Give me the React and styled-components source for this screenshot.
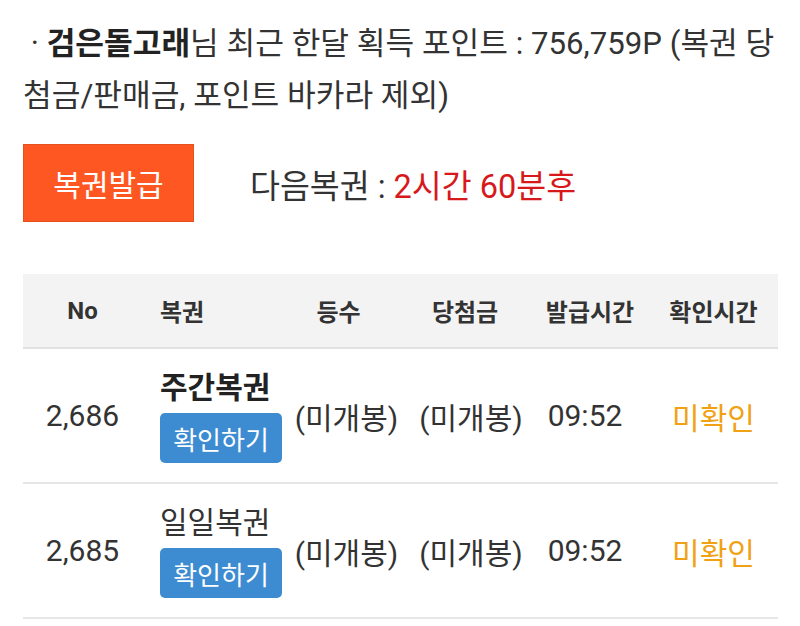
import React from "react";
import styled, { createGlobalStyle } from "styled-components";

const Global = createGlobalStyle`
  html, body { margin: 0; padding: 0; background: #fff; }
  body { font-family: Roboto, "Noto Sans CJK KR", "Noto Sans", sans-serif; color: #333; }
`;

const Page = styled.div`
  width: 800px;
  box-sizing: border-box;
  padding: 18px 22px 0 23px;
`;

const Info = styled.p`
  margin: 0;
  font-size: 31.2px;
  line-height: 52px;
  color: #333;
`;

const Name = styled.b`
  font-weight: 700;
  color: #222;
`;

const ActionRow = styled.div`
  display: flex;
  align-items: center;
  margin-top: 22px;
  gap: 56px;
`;

const IssueButton = styled.button`
  width: 171px;
  height: 78px;
  background: #ff5722;
  border: 1px solid #e5501f;
  color: #fff;
  font-family: inherit;
  font-size: 30px;
  padding: 0;
  cursor: pointer;
`;

const NextInfo = styled.div`
  font-size: 32.5px;
  color: #333;
`;

const Red = styled.span`
  color: #d7191c;
`;

const cols = [
  { w: 119, align: "center", pl: 0, hs: 0 },
  { w: 144, align: "left", pl: 18, hs: 0 },
  { w: 121, align: "center", pl: 0, hs: -8 },
  { w: 128, align: "center", pl: 0, hs: -6 },
  { w: 100, align: "center", pl: 0, hs: 5 },
  { w: 143, align: "center", pl: 14, hs: 0 },
];

const Table = styled.div`
  margin-top: 52px;
  display: grid;
  grid-template-columns: ${cols.map((c) => `${c.w}px`).join(" ")};
`;

const HeadCell = styled.div`
  background: #f3f3f3;
  height: 73px;
  border-bottom: 2px solid #e2e2e2;
  display: flex;
  align-items: center;
  justify-content: ${(p) => (p.$align === "left" ? "flex-start" : "center")};
  padding-left: ${(p) => p.$pl + Math.max(p.$shift * 2, 0)}px;
  padding-right: ${(p) => Math.max(-p.$shift * 2, 0)}px;
  font-size: 24px;
  font-weight: 700;
  color: #333;
  white-space: nowrap;
`;

const Cell = styled.div`
  height: 133px;
  border-bottom: 2px solid #e6e6e6;
  display: flex;
  flex-direction: column;
  justify-content: center;
  align-items: ${(p) => (p.$align === "left" ? "flex-start" : "center")};
  padding-left: ${(p) => p.$pl}px;
  font-size: 30px;
  color: ${(p) => p.$color || "#333"};
  white-space: nowrap;
`;

const TicketName = styled.div`
  font-size: 30px;
  line-height: 36px;
  margin-top: 2px;
  font-weight: ${(p) => (p.$bold ? 700 : 400)};
  color: ${(p) => (p.$bold ? "#222" : "#333")};
`;

const CheckButton = styled.button`
  margin-top: 7px;
  width: 122px;
  height: 50px;
  border: none;
  border-radius: 5px;
  background: #3d8cd1;
  color: #fff;
  font-family: inherit;
  font-size: 26px;
  padding: 0;
  cursor: pointer;
`;

const headers = ["No", "복권", "등수", "당첨금", "발급시간", "확인시간"];

const rows = [
  { no: "2,686", name: "주간복권", bold: true },
  { no: "2,685", name: "일일복권", bold: false },
];

export default function App() {
  return (
    <Page>
      <Global />
      <Info>
        &nbsp;· <Name>검은돌고래</Name>님 최근 한달 획득 포인트 : 756,759P (복권 당
        <br />
        첨금/판매금, 포인트 바카라 제외)
      </Info>
      <ActionRow>
        <IssueButton>복권발급</IssueButton>
        <NextInfo>
          다음복권 : <Red>2시간 60분후</Red>
        </NextInfo>
      </ActionRow>
      <Table>
        {headers.map((h, i) => (
          <HeadCell key={h} $align={cols[i].align} $pl={cols[i].pl} $shift={cols[i].hs}>
            {h}
          </HeadCell>
        ))}
        {rows.map((r) => (
          <React.Fragment key={r.no}>
            <Cell $align={cols[0].align} $pl={cols[0].pl}>{r.no}</Cell>
            <Cell $align={cols[1].align} $pl={cols[1].pl}>
              <TicketName $bold={r.bold}>{r.name}</TicketName>
              <CheckButton>확인하기</CheckButton>
            </Cell>
            <Cell $align={cols[2].align} $pl={cols[2].pl}>(미개봉)</Cell>
            <Cell $align={cols[3].align} $pl={cols[3].pl}>(미개봉)</Cell>
            <Cell $align={cols[4].align} $pl={cols[4].pl}>09:52</Cell>
            <Cell $align={cols[5].align} $pl={cols[5].pl} $color="#f0a114">미확인</Cell>
          </React.Fragment>
        ))}
      </Table>
    </Page>
  );
}
